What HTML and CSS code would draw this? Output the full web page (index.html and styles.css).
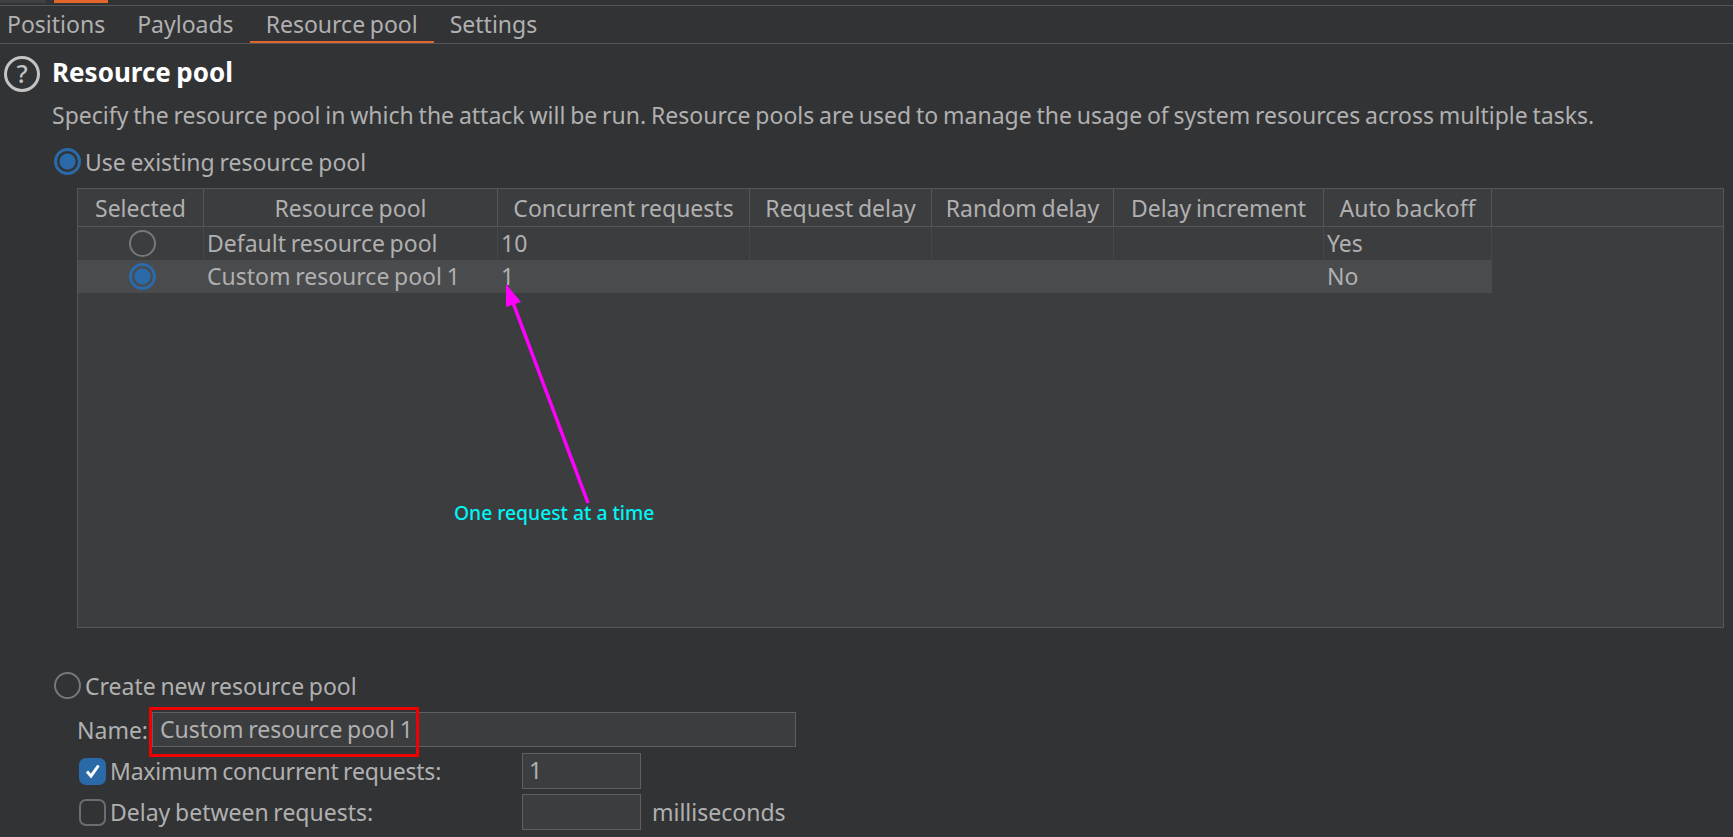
FILE: index.html
```html
<!DOCTYPE html>
<html lang="en">
<head>
    <meta charset="UTF-8">
    <title>Resource pool</title>
    <link rel="stylesheet" href="styles.css">
</head>
<body>
<div class="topbar"><span class="top-left"></span><span class="top-mark"></span></div>
<div class="tabs">
    <div class="tab">Positions</div>
    <div class="tab">Payloads</div>
    <div class="tab active">Resource pool</div>
    <div class="tab">Settings</div>
</div>
<div class="heading">
    <div class="help">?</div>
    <div class="title">Resource pool</div>
</div>
<div class="desc">Specify the resource pool in which the attack will be run. Resource pools are used to manage the usage of system resources across multiple tasks.</div>
<div class="option use-existing">
    <span class="radio on"></span>
    <span>Use existing resource pool</span>
</div>
<div class="table">
    <div class="row head">
        <div class="cell">Selected</div>
        <div class="cell">Resource pool</div>
        <div class="cell">Concurrent requests</div>
        <div class="cell">Request delay</div>
        <div class="cell">Random delay</div>
        <div class="cell">Delay increment</div>
        <div class="cell">Auto backoff</div>
    </div>
    <div class="row">
        <div class="cell center"><span class="radio"></span></div>
        <div class="cell">Default resource pool</div>
        <div class="cell">10</div>
        <div class="cell"></div>
        <div class="cell"></div>
        <div class="cell"></div>
        <div class="cell">Yes</div>
    </div>
    <div class="row picked">
        <div class="cell center"><span class="radio on"></span></div>
        <div class="cell">Custom resource pool 1</div>
        <div class="cell">1</div>
        <div class="cell"></div>
        <div class="cell"></div>
        <div class="cell"></div>
        <div class="cell">No</div>
    </div>
</div>
<div class="option create-new">
    <span class="radio"></span>
    <span>Create new resource pool</span>
</div>
<div class="form-row name-row">
    <span class="name-label">Name:</span>
    <div class="input name-input">Custom resource pool 1</div>
</div>
<div class="form-row max-row">
    <span class="check on">
        <svg width="18" height="18" viewBox="0 0 18 18"><path d="M3 9.5 L7 14 L14.5 3.5" fill="none" stroke="#fff" stroke-width="3"/></svg>
    </span>
    <span class="check-label max-label">Maximum concurrent requests:</span>
    <div class="input small-input">1</div>
</div>
<div class="form-row delay-row">
    <span class="check"></span>
    <span class="check-label">Delay between requests:</span>
    <div class="input small-input"></div>
    <span class="unit">milliseconds</span>
</div>

<!-- annotations drawn over the screenshot -->
<svg class="arrow" width="1733" height="837" viewBox="0 0 1733 837">
    <line x1="588" y1="503" x2="512" y2="300" stroke="#ff00ff" stroke-width="3.5"/>
    <polygon points="506,284 506,307 521,302" fill="#ff00ff"/>
</svg>
<div class="note">One request at a time</div>
<div class="red-box"></div>
</body>
</html>
```

FILE: styles.css
```css
* {
    box-sizing: border-box;
}

html, body {
    margin: 0;
    height: 100%;
}

body {
    position: relative;
    overflow: hidden;
    background: #323335;
    color: #b0b0b0;
    font-family: "Noto Sans", sans-serif;
    font-size: 23px;
    word-spacing: -1.3px;
}

.topbar {
    display: flex;
    height: 6px;
    border-bottom: 1px solid #55565a;
}

.top-left {
    width: 46px;
    height: 3px;
    background: #3f4042;
}

.top-mark {
    width: 54px;
    height: 3px;
    margin-left: 8px;
    background: #e2652b;
}

.tabs {
    display: flex;
    height: 38px;
    border-bottom: 1px solid #55565a;
}

.tab {
    height: 37px;
    padding: 0 16px;
    line-height: 36px;
}

.tab:first-child {
    margin-left: -9px;
}

.tab.active {
    border-bottom: 2px solid #e2652b;
}

.heading {
    display: flex;
    align-items: center;
    gap: 12px;
    height: 36px;
    margin: 12px 0 0 4px;
}

.help {
    width: 36px;
    height: 36px;
    border: 3px solid #c4c4c4;
    border-radius: 50%;
    color: #c4c4c4;
    font-size: 25px;
    font-weight: 500;
    line-height: 29px;
    text-align: center;
}

.title {
    margin-top: -4px;
    color: #fff;
    font-size: 26px;
    font-weight: 700;
}

.desc {
    height: 28px;
    margin: 9px 0 0 52px;
    line-height: 28px;
    word-spacing: -1.15px;
}

.option {
    display: flex;
    align-items: center;
    gap: 4px;
    height: 27px;
    margin-left: 54px;
}

.use-existing {
    margin-top: 19px;
}

.create-new {
    margin-top: 44px;
}

.radio {
    display: block;
    width: 27px;
    height: 27px;
    border: 2px solid #77787a;
    border-radius: 50%;
}

.radio.on {
    border: 3px solid #2a6aa8;
    background: radial-gradient(circle, #2a6aa8 0 7.5px, transparent 8.5px);
}

.table {
    height: 440px;
    margin: 13px 9px 0 77px;
    border: 1px solid #55565a;
    background: #3c3d3f;
}

.row {
    display: grid;
    grid-template-columns: 126px 294px 252px 182px 182px 210px 168px;
    width: 1414px;
    height: 33px;
    line-height: 32px;
}

.row .cell {
    padding-left: 3px;
    white-space: nowrap;
    border-right: 1px solid #46474a;
}

.row.head {
    width: auto;
    height: 38px;
    border-bottom: 1px solid #55565a;
    line-height: 38px;
}

.row.head .cell {
    padding-left: 0;
    border-right: 1px solid #55565a;
    text-align: center;
}

.row.picked {
    background: #4a4b4d;
}

.row.picked .cell {
    border-right: 0;
}

.cell.center {
    display: flex;
    align-items: center;
    justify-content: center;
}

.form-row {
    display: flex;
    align-items: center;
}

.name-row {
    height: 35px;
    margin: 13px 0 0 77px;
}

.name-label {
    width: 75px;
}

.input {
    height: 100%;
    border: 1px solid #5e5f62;
    background: #3c3d3f;
    line-height: 33px;
}

.name-input {
    width: 644px;
    padding-left: 7px;
}

.max-row {
    height: 36px;
    margin: 6px 0 0 79px;
}

.delay-row {
    height: 36px;
    margin: 5px 0 0 79px;
}

.check {
    display: flex;
    flex: none;
    align-items: center;
    justify-content: center;
    width: 27px;
    height: 27px;
    border: 2.5px solid #6c6d70;
    border-radius: 7px;
}

.check.on {
    border: 0;
    background: #2a6aa8;
}

.check-label {
    width: 416px;
    padding-left: 4px;
}

.max-label {
    letter-spacing: -0.2px;
}

.small-input {
    width: 119px;
    padding-left: 6px;
}

.unit {
    margin-left: 11px;
}

/* overlays */
.arrow {
    position: absolute;
    left: 0;
    top: 0;
}

.note {
    position: absolute;
    left: 454px;
    top: 499px;
    color: #00f5f5;
    font-size: 19.3px;
    font-weight: 500;
    line-height: 28px;
    word-spacing: 0;
}

.red-box {
    position: absolute;
    left: 149px;
    top: 707px;
    width: 270px;
    height: 50px;
    border: 3px solid #f00000;
}
```
